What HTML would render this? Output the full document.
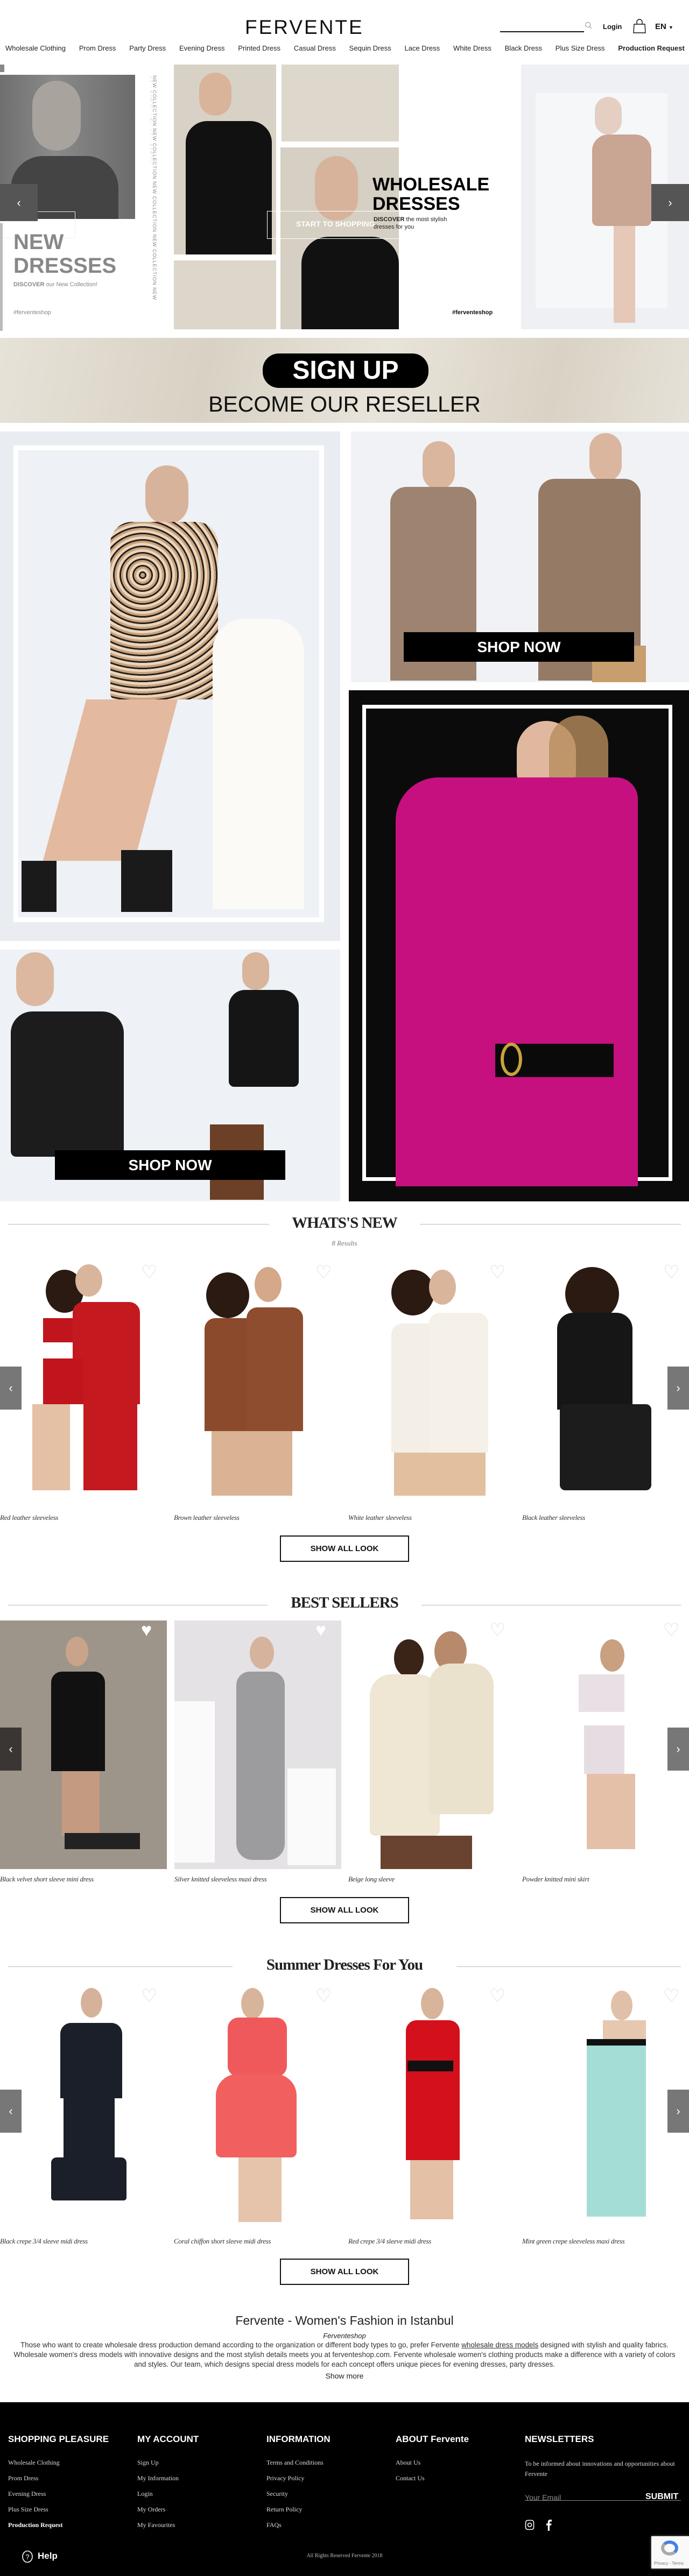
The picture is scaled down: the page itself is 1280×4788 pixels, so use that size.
<!DOCTYPE html>
<html><head><meta charset="utf-8">
<style>
*{margin:0;padding:0;box-sizing:border-box}
body{width:1280px;height:4788px;position:relative;background:#fff;font-family:"Liberation Sans",sans-serif;color:#111;overflow:hidden}
.a{position:absolute}
.nav{position:absolute;top:82px;left:0;width:1280px;display:flex;justify-content:space-between;padding:0 8px 0 10px;font-size:13px;color:#222}
.nav span:last-child{font-weight:bold}
.arrow{position:absolute;width:40px;height:80px;background:#777;color:#fff;font-size:22px;display:flex;align-items:center;justify-content:center}
.title{position:absolute;left:0;width:1280px;text-align:center;font-family:"Liberation Serif",serif;font-weight:bold;font-size:29px;color:#222;letter-spacing:-1px}
.title b{background:#fff;padding:0 28px;position:relative}
.line{position:absolute;height:1px;background:#bbb}
.card{position:absolute;width:310px;overflow:hidden}
.name{position:absolute;font-family:"Liberation Serif",serif;font-style:italic;font-size:13px;color:#333;letter-spacing:-.3px}
.btn{position:absolute;left:520px;width:240px;height:49px;border:2px solid #111;text-align:center;line-height:45px;font-size:15px;font-weight:bold;color:#111;background:#fff}
.heart{position:absolute;width:28px;height:40px;color:#ddd;font-size:34px;line-height:40px}
.fh{position:absolute;top:4524px;font-size:17px;font-weight:bold;color:#fff}
.fl{position:absolute;font-family:"Liberation Serif",serif;font-size:12px;color:#ddd}
.head{position:absolute;border-radius:50%}
.part{position:absolute}
</style></head><body>

<!-- header -->
<div class="a" style="left:455px;top:30px;font-size:37px;letter-spacing:3px;font-weight:normal;color:#111">FERVENTE</div>
<div class="a" style="left:929px;top:58px;width:156px;height:2px;background:#111"></div>
<svg class="a" style="left:1086px;top:40px" width="14" height="14" viewBox="0 0 14 14"><circle cx="6" cy="6" r="4.5" fill="none" stroke="#888" stroke-width="1"/><line x1="9" y1="9" x2="13" y2="13" stroke="#888"/></svg>
<div class="a" style="left:1120px;top:42px;font-size:13px;font-weight:bold">Login</div>
<svg class="a" style="left:1175px;top:35px" width="26" height="27" viewBox="0 0 26 27"><path d="M3 10h20l1 16H2z" fill="none" stroke="#111" stroke-width="1.4"/><path d="M8 10V6a5 5 0 0 1 10 0v4" fill="none" stroke="#111" stroke-width="1.4"/></svg>
<div class="a" style="left:1217px;top:41px;font-size:15px;font-weight:bold">EN <span style="font-size:9px">▼</span></div>
<div class="nav"><span>Wholesale Clothing</span><span>Prom Dress</span><span>Party Dress</span><span>Evening Dress</span><span>Printed Dress</span><span>Casual Dress</span><span>Sequin Dress</span><span>Lace Dress</span><span>White Dress</span><span>Black Dress</span><span>Plus Size Dress</span><span>Production Request</span></div>

<!-- hero -->
<div class="a" style="left:0;top:120px;width:1280px;height:492px;background:#fff"></div>
<div class="a" style="left:0;top:120px;width:8px;height:14px;background:#888"></div>
<div class="a" style="left:0;top:139px;width:251px;height:268px;background:linear-gradient(90deg,#6f6f6f,#8a8a8a 40%,#6b6b6b)"></div>
<div class="a" style="left:60px;top:150px;width:90px;height:130px;border-radius:45px;background:#a9a39e"></div>
<div class="a" style="left:20px;top:290px;width:200px;height:117px;background:#444;border-radius:60px 60px 0 0"></div>
<div class="a" style="left:0;top:393px;width:140px;height:50px;border:1px solid #eee"></div>
<div class="a" style="left:0;top:415px;width:5px;height:200px;background:#bbb"></div>
<div class="a" style="left:25px;top:428px;font-size:40px;font-weight:bold;color:#888;line-height:44px">NEW<br>DRESSES</div>
<div class="a" style="left:25px;top:523px;font-size:11px;color:#888"><b>DISCOVER</b> our New Collection!</div>
<div class="a" style="left:25px;top:575px;font-size:11px;color:#888">#ferventeshop</div>
<div class="a" style="left:280px;top:140px;width:12px;height:460px;writing-mode:vertical-rl;font-size:9px;color:#888;letter-spacing:1px;overflow:hidden">NEW COLLECTION NEW COLLECTION NEW COLLECTION NEW COLLECTION NEW COLLECTION NEW COLLECTION</div>
<div class="a" style="left:323px;top:120px;width:190px;height:353px;background:#d8d2c6"></div>
<div class="a" style="left:370px;top:135px;width:60px;height:80px;border-radius:30px;background:#d9b49a"></div>
<div class="a" style="left:345px;top:225px;width:160px;height:248px;background:#111;border-radius:40px 40px 0 0"></div>
<div class="a" style="left:323px;top:484px;width:190px;height:128px;background:#dcd6cb"></div>
<div class="a" style="left:523px;top:120px;width:218px;height:143px;background:#ddd7cc"></div>
<div class="a" style="left:521px;top:274px;width:220px;height:338px;background:#d6cfc3"></div>
<div class="a" style="left:585px;top:290px;width:80px;height:120px;border-radius:40px;background:#d7b39c"></div>
<div class="a" style="left:560px;top:440px;width:181px;height:172px;background:#111;border-radius:50px 50px 0 0"></div>
<div class="a" style="left:496px;top:392px;width:246px;height:52px;border:1px solid #fff"></div>
<div class="a" style="left:550px;top:408px;font-size:14px;font-weight:bold;color:#fff">START TO SHOPPING</div>
<div class="a" style="left:692px;top:325px;font-size:34px;font-weight:bold;line-height:36px;color:#000">WHOLESALE<br>DRESSES</div>
<div class="a" style="left:694px;top:401px;font-size:11px;line-height:14px;color:#222"><b>DISCOVER</b> the most stylish<br>dresses for you</div>
<div class="a" style="left:840px;top:575px;font-size:11px;font-weight:bold">#ferventeshop</div>
<div class="a" style="left:968px;top:120px;width:312px;height:492px;background:#eef0f3"></div>
<div class="a" style="left:995px;top:173px;width:245px;height:400px;background:#f6f7f9"></div>
<div class="a" style="left:1105px;top:180px;width:50px;height:70px;border-radius:25px;background:#e4cfc2"></div>
<div class="a" style="left:1100px;top:250px;width:110px;height:170px;background:#c9a593;border-radius:30px 30px 10px 10px"></div>
<div class="a" style="left:1140px;top:420px;width:40px;height:180px;background:#e5c8b8"></div>
<div class="arrow" style="left:0;top:342px;width:70px;height:69px;background:#555">‹</div>
<div class="arrow" style="left:1210px;top:342px;width:70px;height:69px;background:#555">›</div>

<!-- sign up -->
<div class="a" style="left:0;top:628px;width:1280px;height:158px;background:linear-gradient(100deg,#e7e2d8,#d8d1c4 30%,#e9e4da 55%,#d9d2c5 80%,#e6e1d7)"></div>
<div class="a" style="left:488px;top:657px;width:308px;height:64px;border-radius:30px;background:#000;color:#fff;font-size:48px;font-weight:bold;text-align:center;line-height:64px">SIGN UP</div>
<div class="a" style="left:0;top:728px;width:1280px;text-align:center;font-size:41px;color:#111;letter-spacing:0">BECOME OUR RESELLER</div>

<!-- grid -->
<div class="a" style="left:0;top:802px;width:632px;height:947px;background:#e9edf2"></div>
<div class="a" style="left:25px;top:828px;width:577px;height:886px;border:9px solid #fff;background:#eef1f5"></div>
<div class="a" style="left:270px;top:865px;width:80px;height:110px;border-radius:40px;background:#d8b39b"></div>
<div class="a" style="left:205px;top:970px;width:200px;height:330px;background:repeating-radial-gradient(circle at 30% 30%,#c9a27c 0 4px,#2a2018 4px 7px,#e8d6bf 7px 12px);border-radius:40px 40px 10px 10px"></div>
<div class="a" style="left:395px;top:1150px;width:170px;height:540px;background:#fbfaf7;border-radius:60px 60px 0 0"></div>
<div class="a" style="left:120px;top:1300px;width:170px;height:300px;background:#e3b9a0;transform:skewX(-15deg)"></div>
<div class="a" style="left:40px;top:1600px;width:65px;height:95px;background:#1a1a1a"></div>
<div class="a" style="left:225px;top:1580px;width:95px;height:115px;background:#1a1a1a"></div>
<div class="a" style="left:652px;top:802px;width:628px;height:466px;background:#f0f2f5"></div>
<div class="a" style="left:785px;top:820px;width:60px;height:90px;border-radius:30px;background:#dab69f"></div>
<div class="a" style="left:725px;top:905px;width:160px;height:360px;background:#9d8370;border-radius:30px 30px 0 0"></div>
<div class="a" style="left:1095px;top:805px;width:60px;height:90px;border-radius:30px;background:#dab69f"></div>
<div class="a" style="left:1000px;top:890px;width:190px;height:375px;background:#957a66;border-radius:30px 30px 0 0"></div>
<div class="a" style="left:1100px;top:1200px;width:100px;height:68px;background:#c89e6f"></div>
<div class="a" style="left:750px;top:1175px;width:428px;height:55px;background:#000;color:#fff;font-size:28px;font-weight:bold;text-align:center;line-height:55px">SHOP NOW</div>

<div class="a" style="left:648px;top:1283px;width:632px;height:950px;background:#0b0b0c"></div>
<div class="a" style="left:673px;top:1310px;width:576px;height:885px;border:7px solid #fff"></div>
<div class="a" style="left:960px;top:1340px;width:110px;height:150px;border-radius:55px;background:#e0b8a0"></div>
<div class="a" style="left:1020px;top:1330px;width:110px;height:150px;border-radius:55px 55px 10px 10px;background:#b68d5c;opacity:.8"></div>
<div class="a" style="left:735px;top:1445px;width:450px;height:760px;background:#c7107f;border-radius:80px 40px 0 0"></div>
<div class="a" style="left:920px;top:1940px;width:220px;height:62px;background:#0a0a0a"></div>
<div class="a" style="left:930px;top:1938px;width:40px;height:62px;border:6px solid #c9a23d;border-radius:50%"></div>

<div class="a" style="left:0;top:1765px;width:632px;height:468px;background:#eef1f5"></div>
<div class="a" style="left:30px;top:1770px;width:70px;height:100px;border-radius:35px;background:#dcb8a0"></div>
<div class="a" style="left:20px;top:1880px;width:210px;height:270px;background:#1c1c1c;border-radius:40px 40px 10px 10px"></div>
<div class="a" style="left:450px;top:1770px;width:50px;height:70px;border-radius:25px;background:#d9b59c"></div>
<div class="a" style="left:425px;top:1840px;width:130px;height:180px;background:#151515;border-radius:30px 30px 10px 10px"></div>
<div class="a" style="left:390px;top:2090px;width:100px;height:140px;background:#6b4026"></div>
<div class="a" style="left:102px;top:2138px;width:428px;height:55px;background:#000;color:#fff;font-size:28px;font-weight:bold;text-align:center;line-height:55px">SHOP NOW</div>

<!-- WHATS NEW -->
<div class="line" style="left:15px;top:2275px;width:485px"></div>
<div class="line" style="left:780px;top:2275px;width:485px"></div>
<div class="title" style="top:2257px">WHATS'S NEW</div>
<div class="a" style="left:0;top:2303px;width:1280px;text-align:center;font-family:'Liberation Serif',serif;font-style:italic;font-size:13px;color:#777">8 Results</div>

<!-- product figures: whats new -->
<div class="card" style="left:0;top:2350px;height:453px">
 <div class="head" style="left:85px;top:10px;width:70px;height:80px;background:#2a1a12"></div><div class="head" style="left:140px;top:0;width:50px;height:60px;background:#d9b59c"></div>
 <div class="part" style="left:80px;top:100px;width:60px;height:45px;background:#c0151c"></div>
 <div class="part" style="left:135px;top:70px;width:125px;height:190px;background:#c41a1f;border-radius:20px 20px 0 0"></div>
 <div class="part" style="left:80px;top:175px;width:75px;height:85px;background:#c0151c"></div>
 <div class="part" style="left:155px;top:255px;width:100px;height:165px;background:#c41a1f"></div>
 <div class="part" style="left:60px;top:260px;width:70px;height:160px;background:#e4c0a5"></div>
</div>
<div class="card" style="left:323px;top:2350px;height:453px">
 <div class="head" style="left:60px;top:15px;width:80px;height:85px;background:#2a1a12"></div><div class="head" style="left:150px;top:5px;width:50px;height:65px;background:#d4a888"></div>
 <div class="part" style="left:57px;top:100px;width:100px;height:210px;background:#8c4a2c;border-radius:20px 20px 0 0"></div>
 <div class="part" style="left:135px;top:80px;width:105px;height:230px;background:#8e4d2f;border-radius:20px 20px 0 0"></div>
 <div class="part" style="left:70px;top:310px;width:150px;height:120px;background:#dab395"></div>
</div>
<div class="card" style="left:647px;top:2350px;height:453px">
 <div class="head" style="left:80px;top:10px;width:80px;height:85px;background:#2a1a12"></div><div class="head" style="left:150px;top:10px;width:50px;height:65px;background:#d9b59c"></div>
 <div class="part" style="left:80px;top:110px;width:100px;height:240px;background:#f3efe6;border-radius:20px 20px 0 0"></div>
 <div class="part" style="left:150px;top:90px;width:110px;height:260px;background:#f5f1e9;border-radius:20px 20px 0 0"></div>
 <div class="part" style="left:85px;top:350px;width:170px;height:80px;background:#e2bf9e"></div>
</div>
<div class="card" style="left:970px;top:2350px;height:453px">
 <div class="head" style="left:80px;top:5px;width:100px;height:100px;background:#2a1a12"></div>
 <div class="part" style="left:65px;top:90px;width:140px;height:180px;background:#161616;border-radius:30px 30px 0 0"></div>
 <div class="part" style="left:70px;top:260px;width:170px;height:160px;background:#1c1c1c;border-radius:10px"></div>
</div>
<div class="heart" style="left:262px;top:2345px">♡</div><div class="heart" style="left:586px;top:2345px">♡</div><div class="heart" style="left:909px;top:2345px">♡</div><div class="heart" style="left:1232px;top:2345px">♡</div>
<div class="arrow" style="left:0;top:2540px">‹</div><div class="arrow" style="left:1240px;top:2540px">›</div>
<div class="name" style="left:0;top:2813px">Red leather sleeveless</div>
<div class="name" style="left:323px;top:2813px">Brown leather sleeveless</div>
<div class="name" style="left:647px;top:2813px">White leather sleeveless</div>
<div class="name" style="left:970px;top:2813px">Black leather sleeveless</div>
<div class="btn" style="top:2854px">SHOW ALL LOOK</div>

<!-- BEST SELLERS -->
<div class="line" style="left:15px;top:2983px;width:482px"></div>
<div class="line" style="left:783px;top:2983px;width:482px"></div>
<div class="title" style="top:2963px">BEST SELLERS</div>
<div class="card" style="left:0;top:3012px;height:462px;background:#9e958a">
 <div class="head" style="left:122px;top:30px;width:42px;height:55px;background:#c9a48b"></div>
 <div class="part" style="left:95px;top:95px;width:100px;height:185px;background:#111;border-radius:20px 20px 0 0"></div>
 <div class="part" style="left:115px;top:280px;width:70px;height:120px;background:#c49a80"></div>
 <div class="part" style="left:120px;top:395px;width:140px;height:30px;background:#222"></div>
</div>
<div class="card" style="left:324px;top:3012px;height:462px;background:#e4e2e4">
 <div class="part" style="left:0;top:150px;width:75px;height:300px;background:#fafafa"></div>
 <div class="part" style="left:210px;top:275px;width:90px;height:180px;background:#fafafa"></div>
 <div class="head" style="left:140px;top:30px;width:45px;height:60px;background:#d6b39d"></div>
 <div class="part" style="left:115px;top:95px;width:90px;height:350px;background:#9c9c9e;border-radius:25px 25px 30px 30px"></div>
</div>
<div class="card" style="left:647px;top:3012px;height:462px">
 <div class="head" style="left:85px;top:35px;width:55px;height:70px;background:#3a2418"></div>
 <div class="head" style="left:160px;top:20px;width:60px;height:75px;background:#b88a6c"></div>
 <div class="part" style="left:40px;top:100px;width:130px;height:300px;background:#efe6d3;border-radius:40px 40px 10px 10px"></div>
 <div class="part" style="left:150px;top:80px;width:120px;height:280px;background:#ebe2ce;border-radius:40px 40px 10px 10px"></div>
 <div class="part" style="left:60px;top:400px;width:170px;height:62px;background:#6a4230"></div>
</div>
<div class="card" style="left:970px;top:3012px;height:462px">
 <div class="head" style="left:145px;top:35px;width:45px;height:60px;background:#c9a080"></div>
 <div class="part" style="left:105px;top:100px;width:85px;height:70px;background:#e8e0e4"></div>
 <div class="part" style="left:115px;top:195px;width:75px;height:90px;background:#e6dde2"></div>
 <div class="part" style="left:120px;top:285px;width:90px;height:140px;background:#e4c0a8"></div>
</div>
<div class="heart" style="left:262px;top:3010px;color:#fff">♥</div><div class="heart" style="left:586px;top:3010px;color:#fff">♥</div><div class="heart" style="left:909px;top:3010px">♡</div><div class="heart" style="left:1232px;top:3010px">♡</div>
<div class="arrow" style="left:0;top:3211px;background:#3a3634">‹</div><div class="arrow" style="left:1240px;top:3211px">›</div>
<div class="name" style="left:0;top:3485px">Black velvet short sleeve mini dress</div>
<div class="name" style="left:324px;top:3485px">Silver knitted sleeveless maxi dress</div>
<div class="name" style="left:647px;top:3485px">Beige long sleeve</div>
<div class="name" style="left:970px;top:3485px">Powder knitted mini skirt</div>
<div class="btn" style="top:3526px">SHOW ALL LOOK</div>

<!-- SUMMER -->
<div class="line" style="left:15px;top:3655px;width:417px"></div>
<div class="line" style="left:848px;top:3655px;width:417px"></div>
<div class="title" style="top:3636px;font-weight:bold">Summer Dresses For You</div>
<div class="card" style="left:0;top:3690px;height:457px">
 <div class="head" style="left:150px;top:5px;width:40px;height:55px;background:#d6b29a"></div>
 <div class="part" style="left:112px;top:70px;width:115px;height:140px;background:#1b1f2a;border-radius:20px 20px 0 0"></div>
 <div class="part" style="left:118px;top:210px;width:95px;height:110px;background:#1b1f2a"></div>
 <div class="part" style="left:95px;top:320px;width:140px;height:80px;background:#1b1f2a;border-radius:10px 10px 5px 5px"></div>
</div>
<div class="card" style="left:323px;top:3690px;height:457px">
 <div class="head" style="left:125px;top:5px;width:42px;height:58px;background:#d8b49a"></div>
 <div class="part" style="left:100px;top:60px;width:110px;height:110px;background:#f0595b;border-radius:20px"></div>
 <div class="part" style="left:78px;top:165px;width:150px;height:155px;background:#f25f5f;border-radius:40px 40px 10px 10px"></div>
 <div class="part" style="left:120px;top:320px;width:80px;height:120px;background:#e6c4ab"></div>
</div>
<div class="card" style="left:647px;top:3690px;height:457px">
 <div class="head" style="left:135px;top:5px;width:42px;height:58px;background:#d8b49a"></div>
 <div class="part" style="left:107px;top:65px;width:100px;height:260px;background:#d3101c;border-radius:20px 20px 0 0"></div>
 <div class="part" style="left:110px;top:140px;width:85px;height:20px;background:#111"></div>
 <div class="part" style="left:115px;top:325px;width:80px;height:110px;background:#e3c0a6"></div>
</div>
<div class="card" style="left:970px;top:3690px;height:457px">
 <div class="head" style="left:165px;top:10px;width:40px;height:55px;background:#e0c0a8"></div>
 <div class="part" style="left:150px;top:65px;width:80px;height:40px;background:#e6c8b0"></div>
 <div class="part" style="left:120px;top:100px;width:110px;height:330px;background:#a3ddd6;border-radius:10px 10px 0 0"></div>
 <div class="part" style="left:120px;top:100px;width:110px;height:12px;background:#111"></div>
</div>
<div class="heart" style="left:262px;top:3690px">♡</div><div class="heart" style="left:586px;top:3690px">♡</div><div class="heart" style="left:909px;top:3690px">♡</div><div class="heart" style="left:1232px;top:3690px">♡</div>
<div class="arrow" style="left:0;top:3884px">‹</div><div class="arrow" style="left:1240px;top:3884px">›</div>
<div class="name" style="left:0;top:4158px">Black crepe 3/4 sleeve midi dress</div>
<div class="name" style="left:323px;top:4158px">Coral chiffon short sleeve midi dress</div>
<div class="name" style="left:647px;top:4158px">Red crepe 3/4 sleeve midi dress</div>
<div class="name" style="left:970px;top:4158px">Mint green crepe sleeveless maxi dress</div>
<div class="btn" style="top:4198px">SHOW ALL LOOK</div>

<!-- SEO -->
<div class="a" style="left:0;top:4300px;width:1280px;text-align:center;font-size:23px;color:#222">Fervente - Women's Fashion in Istanbul</div>
<div class="a" style="left:0;top:4334px;width:1280px;text-align:center;font-size:13px;font-style:italic;color:#222">Ferventeshop</div>
<div class="a" style="left:15px;top:4350px;width:1250px;text-align:center;font-size:13.4px;line-height:18px;color:#333;height:54px;overflow:hidden">Those who want to create wholesale dress production demand according to the organization or different body types to go, prefer Fervente <u>wholesale dress models</u> designed with stylish and quality fabrics. Wholesale women's dress models with innovative designs and the most stylish details meets you at ferventeshop.com. Fervente wholesale women's clothing products make a difference with a variety of colors and styles. Our team, which designs special dress models for each concept offers unique pieces for evening dresses, party dresses.</div>
<div class="a" style="left:0;top:4408px;width:1280px;text-align:center;font-size:14px;color:#222">Show more</div>

<!-- footer -->
<div class="a" style="left:0;top:4465px;width:1280px;height:323px;background:#000"></div>
<div class="fh" style="left:15px">SHOPPING PLEASURE</div>
<div class="fh" style="left:255px">MY ACCOUNT</div>
<div class="fh" style="left:495px">INFORMATION</div>
<div class="fh" style="left:735px">ABOUT Fervente</div>
<div class="fh" style="left:975px">NEWSLETTERS</div>
<div class="fl" style="left:15px;top:4570px">Wholesale Clothing</div>
<div class="fl" style="left:15px;top:4599px">Prom Dress</div>
<div class="fl" style="left:15px;top:4628px">Evening Dress</div>
<div class="fl" style="left:15px;top:4657px">Plus Size Dress</div>
<div class="fl" style="left:15px;top:4686px;color:#fff;font-weight:bold">Production Request</div>
<div class="fl" style="left:255px;top:4570px">Sign Up</div>
<div class="fl" style="left:255px;top:4599px">My Information</div>
<div class="fl" style="left:255px;top:4628px">Login</div>
<div class="fl" style="left:255px;top:4657px">My Orders</div>
<div class="fl" style="left:255px;top:4686px">My Favourites</div>
<div class="fl" style="left:495px;top:4570px">Terms and Conditions</div>
<div class="fl" style="left:495px;top:4599px">Privacy Policy</div>
<div class="fl" style="left:495px;top:4628px">Security</div>
<div class="fl" style="left:495px;top:4657px">Return Policy</div>
<div class="fl" style="left:495px;top:4686px">FAQs</div>
<div class="fl" style="left:735px;top:4570px">About Us</div>
<div class="fl" style="left:735px;top:4599px">Contact Us</div>
<div class="fl" style="left:975px;top:4570px;line-height:19px;width:290px">To be informed about innovations and opportunities about Fervente</div>
<div class="a" style="left:975px;top:4634px;font-size:14px;color:#888">Your Email</div>
<div class="a" style="left:1199px;top:4632px;font-size:16px;font-weight:bold;color:#fff">SUBMIT</div>
<div class="a" style="left:975px;top:4647px;width:290px;height:1px;background:#888"></div>
<svg class="a" style="left:975px;top:4683px" width="18" height="20" viewBox="0 0 18 20"><rect x="1.5" y="1.5" width="15" height="17" rx="4" fill="none" stroke="#fff" stroke-width="1.6"/><circle cx="9" cy="10" r="3.5" fill="none" stroke="#fff" stroke-width="1.6"/></svg>
<svg class="a" style="left:1013px;top:4682px" width="12" height="22" viewBox="0 0 12 22"><path d="M8 22V12h3l.5-3.5H8V6.5c0-1 .3-1.7 1.8-1.7H12V1.5C11.5 1.4 10.4 1.3 9.2 1.3 6.6 1.3 4.8 2.9 4.8 5.8v2.7H2V12h2.8v10z" fill="#fff"/></svg>
<svg class="a" style="left:40px;top:4740px" width="22" height="24" viewBox="0 0 22 24"><ellipse cx="11" cy="12" rx="9" ry="10.5" fill="none" stroke="#fff" stroke-width="1.6"/><text x="11" y="17" font-size="13" fill="#fff" text-anchor="middle" font-family="Liberation Sans">?</text></svg>
<div class="a" style="left:70px;top:4741px;font-size:17px;font-weight:bold;color:#fff">Help</div>
<div class="a" style="left:0;top:4745px;width:1280px;text-align:center;font-family:'Liberation Serif',serif;font-size:10px;color:#bbb">All Rights Reserved Fervente 2018</div>
<div class="a" style="left:1210px;top:4714px;width:70px;height:60px;background:#f9f9f9;box-shadow:0 0 4px #888"></div>
<div class="a" style="left:1228px;top:4722px;width:32px;height:28px;border-radius:50%;border:6px solid #4a7fe0;border-left-color:#aaa;border-bottom-color:#aaa"></div>
<div class="a" style="left:1215px;top:4760px;font-size:8px;color:#777">Privacy - Terms</div>
</body></html>
